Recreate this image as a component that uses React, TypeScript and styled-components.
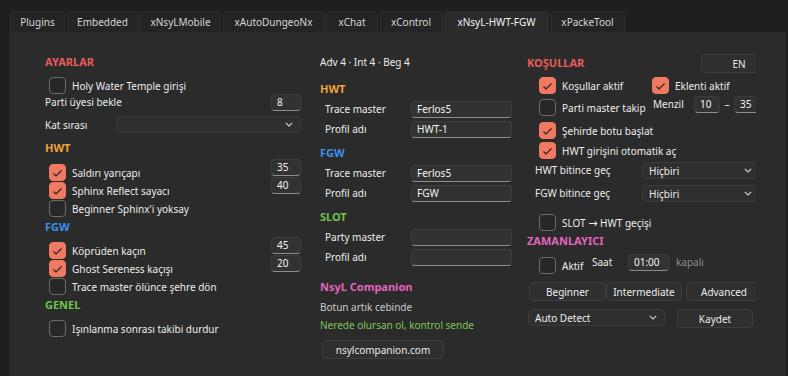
import React from "react";
import styled, { createGlobalStyle } from "styled-components";

const GlobalStyle = createGlobalStyle`
  * { box-sizing: border-box; }
  html, body { margin: 0; padding: 0; background: #1f1f1f; }
  body {
    font-family: "Noto Sans", "Open Sans", sans-serif;
    font-size: 10px;
    color: #ececec;
    overflow: hidden;
  }
`;

const RED = "#ea5b5b";
const ORANGE = "#f2a33a";
const BLUE = "#3b91ee";
const GREEN = "#6fc24c";
const PINK = "#e364bf";

const Window = styled.div`
  width: 788px;
  height: 376px;
  display: flex;
  flex-direction: column;
  background: #1f1f1f;
`;

const TabBar = styled.div`
  height: 32px;
  display: flex;
  align-items: flex-end;
  gap: 1.5px;
  padding-left: 10px;
`;

const Tab = styled.div<{ $w: number; $active?: boolean }>`
  width: ${(p) => p.$w}px;
  height: 21px;
  display: flex;
  align-items: center;
  justify-content: center;
  padding-bottom: 1px;
  border: 1px solid #2e2e2e;
  border-bottom: none;
  border-radius: 4px 4px 0 0;
  background: ${(p) => (p.$active ? "#2b2b2b" : "#242424")};
  color: ${(p) => (p.$active ? "#f4f4f4" : "#d6d6d6")};
`;

const Panel = styled.div`
  flex: 1;
  margin-left: 9px;
  width: 777px;
  background: #2b2b2b;
  display: flex;
  padding: 22px 0 0 36px;
`;

const Column = styled.div<{ $w: number; $gap: number }>`
  width: ${(p) => p.$w}px;
  margin-right: ${(p) => p.$gap}px;
  flex-shrink: 0;
  display: flex;
  flex-direction: column;
  overflow: hidden;
`;

const Heading = styled.div<{ $color: string; $mt?: number }>`
  height: 16px;
  line-height: 16px;
  margin-top: ${(p) => p.$mt ?? 0}px;
  font-weight: 700;
  font-size: 11px;
  color: ${(p) => p.$color};
  flex-shrink: 0;
`;

const CheckLabel = styled.label<{ $mt?: number; $w?: number; $pl?: number }>`
  display: flex;
  align-items: center;
  gap: 6px;
  height: 17px;
  flex-shrink: 0;
  margin-top: ${(p) => p.$mt ?? 0}px;
  padding-left: ${(p) => p.$pl ?? 0}px;
  width: ${(p) => (p.$w ? `${p.$w}px` : "auto")};
  white-space: nowrap;
`;

const Box = styled.span<{ $on?: boolean }>`
  width: 17px;
  height: 17px;
  flex-shrink: 0;
  border-radius: 4px;
  border: 1.5px solid ${(p) => (p.$on ? "#f07a61" : "#6c6c6c")};
  background: ${(p) => (p.$on ? "#f07a61" : "#272727")};
  display: flex;
  align-items: center;
  justify-content: center;
`;

const Arrow = styled.span`
  font-family: "DejaVu Sans", sans-serif;
  font-size: 11px;
`;

const Check = ({
  on,
  children,
  mt,
  w,
  pl,
}: {
  on?: boolean;
  children: React.ReactNode;
  mt?: number;
  w?: number;
  pl?: number;
}) => (
  <CheckLabel $mt={mt} $w={w} $pl={pl}>
    <Box $on={on}>
      {on && (
        <svg width="14" height="14" viewBox="0 0 14 14">
          <polyline
            points="2.5,7.5 5,10 10.5,4.5"
            fill="none"
            stroke="#2a1c18"
            strokeWidth="1.1"
          />
        </svg>
      )}
    </Box>
    <span>{children}</span>
  </CheckLabel>
);

const Row = styled.div<{ $h: number; $mt?: number; $pl?: number }>`
  display: flex;
  align-items: flex-start;
  height: ${(p) => p.$h}px;
  margin-top: ${(p) => p.$mt ?? 0}px;
  padding-left: ${(p) => p.$pl ?? 0}px;
  flex-shrink: 0;
`;

const Label = styled.div<{ $w?: number; $h?: number; $color?: string }>`
  width: ${(p) => (p.$w ? `${p.$w}px` : "auto")};
  height: ${(p) => p.$h ?? 17}px;
  line-height: ${(p) => p.$h ?? 17}px;
  color: ${(p) => p.$color ?? "#ececec"};
  flex-shrink: 0;
  white-space: nowrap;
`;

const Field = styled.div<{ $w: number; $ml?: number }>`
  width: ${(p) => p.$w}px;
  height: 17px;
  margin-left: ${(p) => p.$ml ?? 0}px;
  flex-shrink: 0;
  padding: 0 5px;
  line-height: 15px;
  background: #323232;
  border: 1px solid #3d3d3d;
  border-bottom-color: #8e8e8e;
  border-radius: 4px;
  color: #f2f2f2;
  white-space: nowrap;
`;

const SelectBox = styled.div<{ $w: number; $ml?: number }>`
  width: ${(p) => p.$w}px;
  height: 17px;
  margin-left: ${(p) => p.$ml ?? 0}px;
  flex-shrink: 0;
  display: flex;
  align-items: center;
  justify-content: space-between;
  padding: 0 7px 0 6px;
  background: #2f2f2f;
  border: 1px solid #3b3b3b;
  border-radius: 4px;
  color: #ececec;
`;

const Chevron = () => (
  <svg width="8" height="5" viewBox="0 0 8 5">
    <polyline points="0.8,0.8 4,4 7.2,0.8" fill="none" stroke="#d4d4d4" strokeWidth="1.1" />
  </svg>
);

const Select = ({ w, ml, value }: { w: number; ml?: number; value?: string }) => (
  <SelectBox $w={w} $ml={ml}>
    <span>{value ?? ""}</span>
    <Chevron />
  </SelectBox>
);

const Button = styled.div<{ $w: number; $h?: number; $ml?: number; $mr?: number }>`
  width: ${(p) => p.$w}px;
  height: ${(p) => p.$h ?? 19}px;
  margin-left: ${(p) => p.$ml ?? 0}px;
  margin-right: ${(p) => p.$mr ?? 0}px;
  flex-shrink: 0;
  display: flex;
  align-items: center;
  justify-content: center;
  background: #2f2f2f;
  border: 1px solid #3e3e3e;
  border-radius: 4px;
  color: #ececec;
`;

const Spread = styled(Row)`
  justify-content: space-between;
`;

const ItemRow = ({ on, label, value }: { on?: boolean; label: string; value?: string }) => (
  <Spread $h={18}>
    <Check on={on} mt={5} pl={4}>
      {label}
    </Check>
    {value && <Field $w={30}>{value}</Field>}
  </Spread>
);

const tabs: [string, number][] = [
  ["Plugins", 55],
  ["Embedded", 72],
  ["xNsyLMobile", 81],
  ["xAutoDungeoNx", 102],
  ["xChat", 52],
  ["xControl", 63],
  ["xNsyL-HWT-FGW", 105],
  ["xPackeTool", 74],
];

export default function App() {
  return (
    <>
      <GlobalStyle />
      <Window>
        <TabBar>
          {tabs.map(([name, w]) => (
            <Tab key={name} $w={w} $active={name === "xNsyL-HWT-FGW"}>
              {name}
            </Tab>
          ))}
        </TabBar>
        <Panel>
          <Column $w={256} $gap={19}>
            <Heading $color={RED}>AYARLAR</Heading>
            <Check mt={7} pl={4}>
              Holy Water Temple girişi
            </Check>
            <Spread $h={17}>
              <Label>Parti üyesi bekle</Label>
              <Field $w={30}>8</Field>
            </Spread>
            <Row $h={18} $mt={5}>
              <Label $w={71} $h={18}>
                Kat sırası
              </Label>
              <Select w={185} />
            </Row>
            <Heading $color={ORANGE} $mt={6}>
              HWT
            </Heading>
            <Row $h={3} />
            <ItemRow on label="Saldırı yarıçapı" value="35" />
            <ItemRow on label="Sphinx Reflect sayacı" value="40" />
            <ItemRow label="Beginner Sphinx'i yoksay" />
            <Heading $color={BLUE} $mt={6}>
              FGW
            </Heading>
            <Row $h={2} />
            <ItemRow on label="Köprüden kaçın" value="45" />
            <ItemRow on label="Ghost Sereness kaçışı" value="20" />
            <ItemRow label="Trace master ölünce şehre dön" />
            <Heading $color={GREEN} $mt={6}>
              GENEL
            </Heading>
            <Check mt={7} pl={4}>
              Işınlanma sonrası takibi durdur
            </Check>
          </Column>

          <Column $w={192} $gap={15}>
            <Label $h={16}>Adv 4 · Int 4 · Beg 4</Label>
            <Heading $color={ORANGE} $mt={11}>
              HWT
            </Heading>
            <Row $h={17} $mt={4} $pl={5}>
              <Label $w={86}>Trace master</Label>
              <Field $w={101}>Ferlos5</Field>
            </Row>
            <Row $h={17} $mt={3} $pl={5}>
              <Label $w={86}>Profil adı</Label>
              <Field $w={101}>HWT-1</Field>
            </Row>
            <Heading $color={BLUE} $mt={7}>
              FGW
            </Heading>
            <Row $h={17} $mt={4} $pl={5}>
              <Label $w={86}>Trace master</Label>
              <Field $w={101}>Ferlos5</Field>
            </Row>
            <Row $h={17} $mt={3} $pl={5}>
              <Label $w={86}>Profil adı</Label>
              <Field $w={101}>FGW</Field>
            </Row>
            <Heading $color={GREEN} $mt={7}>
              SLOT
            </Heading>
            <Row $h={17} $mt={4} $pl={5}>
              <Label $w={86}>Party master</Label>
              <Field $w={101} />
            </Row>
            <Row $h={17} $mt={3} $pl={5}>
              <Label $w={86}>Profil adı</Label>
              <Field $w={101} />
            </Row>
            <Heading $color={PINK} $mt={13}>
              NsyL Companion
            </Heading>
            <Row $h={18} $mt={3}>
              <Label $h={18} $color="#c9c9c9">
                Botun artık cebinde
              </Label>
            </Row>
            <Row $h={18}>
              <Label $h={18} $color="#7cc35a">
                Nerede olursan ol, kontrol sende
              </Label>
            </Row>
            <Row $h={19} $mt={6}>
              <Button $w={122} $ml={2}>
                nsylcompanion.com
              </Button>
            </Row>
          </Column>

          <Column $w={229} $gap={0}>
            <Row $h={19}>
              <Heading $color={RED} style={{ width: 174, marginTop: 1 }}>
                KOŞULLAR
              </Heading>
              <Button $w={76}>EN</Button>
            </Row>
            <Row $h={17} $mt={4}>
              <Check on w={125} pl={12}>
                Koşullar aktif
              </Check>
              <Check on>Eklenti aktif</Check>
            </Row>
            <Row $h={20} $mt={2}>
              <Check w={126} mt={3} pl={12}>
                Parti master takip
              </Check>
              <Label $w={41}>Menzil</Label>
              <Field $w={26}>10</Field>
              <Label $w={14} style={{ textAlign: "center" }}>
                –
              </Label>
              <Field $w={26}>35</Field>
            </Row>
            <Check on mt={6} pl={12}>
              Şehirde botu başlat
            </Check>
            <Check on mt={3} pl={12}>
              HWT girişini otomatik aç
            </Check>
            <Row $h={17} $mt={3} $pl={8}>
              <Label $w={107}>HWT bitince geç</Label>
              <Select w={118} value="Hiçbiri" />
            </Row>
            <Row $h={17} $mt={6} $pl={8}>
              <Label $w={107}>FGW bitince geç</Label>
              <Select w={118} value="Hiçbiri" />
            </Row>
            <Check mt={12} pl={12}>
              SLOT <Arrow>→</Arrow> HWT geçişi
            </Check>
            <Heading $color={PINK} $mt={2}>
              ZAMANLAYICI
            </Heading>
            <Row $h={20} $mt={5}>
              <Check mt={3} pl={12} w={65}>
                Aktif
              </Check>
              <Label $w={36}>Saat</Label>
              <Field $w={41}>01:00</Field>
              <Label $color="#8a8a8a" style={{ marginLeft: 7 }}>
                kapalı
              </Label>
            </Row>
            <Row $h={19} $mt={8}>
              <Button $w={77} $ml={2}>
                Beginner
              </Button>
              <Button $w={76} $mr={4}>
                Intermediate
              </Button>
              <Button $w={76}>Advanced</Button>
            </Row>
            <Row $h={19} $mt={8}>
              <Select w={137} ml={1} value="Auto Detect" />
              <Button $w={76} $ml={12}>
                Kaydet
              </Button>
            </Row>
          </Column>
        </Panel>
      </Window>
    </>
  );
}
